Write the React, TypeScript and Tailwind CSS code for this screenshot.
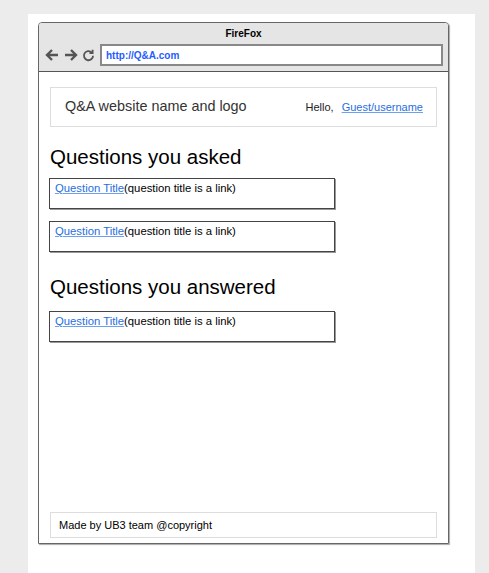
import React from 'react';

const QuestionBox: React.FC = () => (
  <div className="w-[286px] h-[31px] border border-[#444] shadow-[1px_1px_0_#999] px-[5px] pt-[2px] text-[11.3px] leading-[14px] text-black">
    <a href="#" className="text-[#1f6fe0] underline decoration-[#6fa0f0]">
      Question Title
    </a>
    (question title is a link)
  </div>
);

const App: React.FC = () => {
  return (
    <div
      className="w-full h-[573px] bg-[#ececec] pl-[28px] pt-[14px] overflow-hidden"
      style={{ fontFamily: '"Liberation Sans", Arial, sans-serif' }}
    >
      <div className="w-[447px] h-full bg-white pl-[10px] pt-[8px]">
        <div className="w-[411px] h-[522px] border border-[#666] rounded-t-[4px] shadow-[1px_1px_1px_#aaa] flex flex-col overflow-hidden">
          {/* title bar */}
          <div className="h-[49px] bg-[#e5e5e5] border-b border-[#555] flex flex-col">
            <div className="h-[21px] flex items-center justify-center text-[10px] font-bold text-black">
              FireFox
            </div>
            <div className="flex items-center pl-[6px] pr-[5px]">
              <svg width="14" height="14" viewBox="0 0 14 14" fill="none" stroke="#555" strokeWidth="2.4" className="mr-[5px]">
                <path d="M13 7H2M7 2L2 7l5 5" />
              </svg>
              <svg width="14" height="14" viewBox="0 0 14 14" fill="none" stroke="#555" strokeWidth="2.4" className="mr-[4px]">
                <path d="M1 7h11M7 2l5 5-5 5" />
              </svg>
              <svg width="13" height="13" viewBox="0 0 12 12" fill="none" stroke="#555" strokeWidth="1.7" className="mr-[5px]">
                <path d="M10.2 6.2a4.2 4.2 0 1 1-1.3-3.1" />
                <path d="M9.8 0.8v2.9H6.9" />
              </svg>
              <div className="flex-1 h-[22px] border-2 border-[#888] bg-white flex items-center pl-[4px] text-[10px] font-bold text-[#1f5cff]">
                http://Q&amp;A.com
              </div>
            </div>
          </div>

          {/* page */}
          <div className="flex-1 flex flex-col px-[11px] pt-[15px] pb-[5px]">
            <div className="h-[40px] border border-[#ddd] flex items-center justify-between pl-[14px] pr-[13px]">
              <span className="text-[14.4px] text-[#333]">Q&amp;A website name and logo</span>
              <span className="text-[11px] text-[#222]">
                Hello,
                <a href="#" className="ml-[8px] text-[#1f6fe0] underline decoration-[#6fa0f0]">
                  Guest/username
                </a>
              </span>
            </div>

            <h2 className="mt-[18px] text-[20.5px] leading-[24px] text-black">Questions you asked</h2>
            <div className="mt-[9px] -ml-[1px] flex flex-col gap-[12px]">
              <QuestionBox />
              <QuestionBox />
            </div>

            <h2 className="mt-[23px] text-[20.5px] leading-[24px] text-black">Questions you answered</h2>
            <div className="mt-[12px] -ml-[1px]">
              <QuestionBox />
            </div>

            <div className="mt-auto h-[26px] border border-[#ddd] flex items-center pl-[8px] text-[11px] text-black">
              Made by UB3 team @copyright
            </div>
          </div>
        </div>
      </div>
    </div>
  );
};

export default App;
